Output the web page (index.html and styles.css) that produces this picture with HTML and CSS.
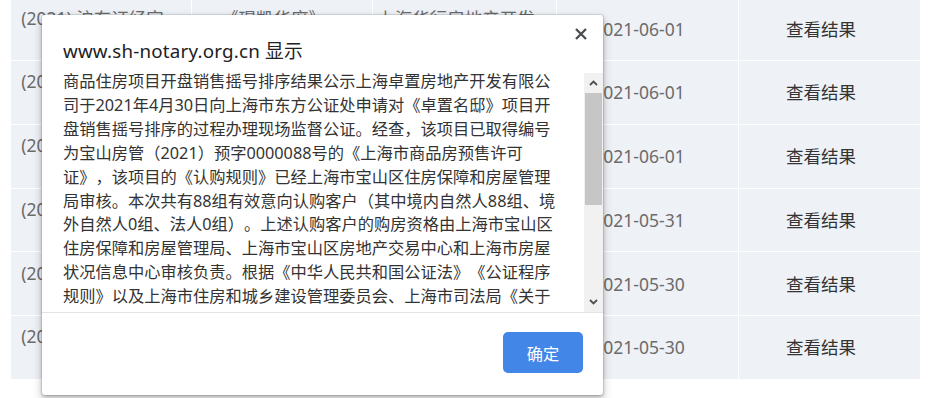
FILE: index.html
```html
<!DOCTYPE html>
<html lang="zh-CN">
<head>
<meta charset="utf-8">
<title>公证结果</title>
<link rel="stylesheet" href="styles.css">
</head>
<body>
<div class="table">
  <div class="cell">(2021) 沪东证经字<br>第4731号</div><div class="cell">《璟凯华府》<br>一期</div><div class="cell">上海华行房地产开发<br>有限公司</div><div class="cell">2021-06-01</div><div class="cell link">查看结果</div>
  <div class="cell">(2021) 沪东证经字<br>第4730号</div><div class="cell">《卓置名邸》<br>一期</div><div class="cell">上海卓置房地产开发<br>有限公司</div><div class="cell">2021-06-01</div><div class="cell link">查看结果</div>
  <div class="cell">(2021) 沪东证经字<br>第4729号</div><div class="cell">《璟园》<br>二期</div><div class="cell">上海城建置业发展<br>有限公司</div><div class="cell">2021-06-01</div><div class="cell link">查看结果</div>
  <div class="cell">(2021) 沪东证经字<br>第4712号</div><div class="cell">《翡翠云庭》<br>一期</div><div class="cell">上海金桥房地产开发<br>有限公司</div><div class="cell">2021-05-31</div><div class="cell link">查看结果</div>
  <div class="cell">(2021) 沪东证经字<br>第4698号</div><div class="cell">《海上源邸》<br>一期</div><div class="cell">上海宝山房地产开发<br>有限公司</div><div class="cell">2021-05-30</div><div class="cell link">查看结果</div>
  <div class="cell">(2021) 沪东证经字<br>第4697号</div><div class="cell">《滨江华庭》<br>二期</div><div class="cell">上海申江房地产开发<br>有限公司</div><div class="cell">2021-05-30</div><div class="cell link">查看结果</div>
</div>

<div class="dialog">
  <div class="dlg-title">www.sh-notary.org.cn 显示</div>
  <button class="dlg-close" aria-label="关闭">
    <svg width="12" height="12" viewBox="0 0 12 12"><path d="M1 1 L11 11 M11 1 L1 11" stroke="#4a4d51" stroke-width="2.3" fill="none"/></svg>
  </button>
  <div class="dlg-body">
    <div class="dlg-text">商品住房项目开盘销售摇号排序结果公示上海卓置房地产开发有限公司于2021年4月30日向上海市东方公证处申请对《卓置名邸》项目开盘销售摇号排序的过程办理现场监督公证。经查，该项目已取得编号为宝山房管（2021）预字0000088号的《上海市商品房预售许可证》，该项目的《认购规则》已经上海市宝山区住房保障和房屋管理局审核。本次共有88组有效意向认购客户（其中境内自然人88组、境外自然人0组、法人0组）。上述认购客户的购房资格由上海市宝山区住房保障和房屋管理局、上海市宝山区房地产交易中心和上海市房屋状况信息中心审核负责。根据《中华人民共和国公证法》《公证程序规则》以及上海市住房和城乡建设管理委员会、上海市司法局《关于进一步加强本市商品住房销售管理的通知》等规定，公证员对摇号排序的全过程进行了现场监督。</div>
    <div class="scrollbar">
      <div class="sb-btn">
        <svg width="9" height="6" viewBox="0 0 9 6"><path d="M1 5 L4.5 1.5 L8 5" stroke="#505050" stroke-width="1.8" fill="none"/></svg>
      </div>
      <div class="sb-track"><div class="sb-thumb"></div></div>
      <div class="sb-btn">
        <svg width="9" height="6" viewBox="0 0 9 6"><path d="M1 1 L4.5 4.5 L8 1" stroke="#505050" stroke-width="1.8" fill="none"/></svg>
      </div>
    </div>
  </div>
  <div class="dlg-footer">
    <button class="dlg-ok">确定</button>
  </div>
</div>
</body>
</html>
```

FILE: styles.css
```css
html, body {
  margin: 0;
  padding: 0;
  background: #ffffff;
}

body {
  position: relative;
  width: 935px;
  height: 398px;
  overflow: hidden;
  font-family: "Noto Sans", "Noto Sans CJK SC", sans-serif;
  text-spacing-trim: space-all;
}

.table {
  display: grid;
  grid-template-columns: 180px 180px 183px 181px 181px;
  grid-auto-rows: 62.75px;
  gap: 1px;
  width: 909px;
  margin: -2.75px 0 0 11px;
  background: #ffffff;
}

.cell {
  display: flex;
  align-items: center;
  justify-content: center;
  text-align: center;
  padding-right: 17px;
  background: #eef1f6;
  color: #6b6b6b;
  font-size: 17.5px;
  line-height: 22px;
  white-space: nowrap;
  overflow: hidden;
}

.cell.link {
  color: #333333;
}

.dialog {
  position: absolute;
  left: 42px;
  top: 15px;
  width: 561px;
  height: 380px;
  background: #ffffff;
  border-radius: 3px;
  box-shadow: 0 0 0 1px rgba(0, 0, 0, 0.08), 0 2px 4px rgba(0, 0, 0, 0.25), 0 4px 10px 2px rgba(0, 0, 0, 0.12);
  display: flex;
  flex-direction: column;
  box-sizing: border-box;
}

.dlg-title {
  padding: 24px 21px 0 21px;
  height: 24px;
  font-size: 18.75px;
  line-height: 24px;
  color: #202124;
  letter-spacing: 0.2px;
}

.dlg-close {
  position: absolute;
  left: 532px;
  top: 12px;
  width: 14px;
  height: 14px;
  padding: 1px;
  border: 0;
  background: transparent;
  display: flex;
  align-items: center;
  justify-content: center;
}

.dlg-body {
  margin-top: 7px;
  height: 242px;
  display: flex;
  justify-content: space-between;
}

.dlg-text {
  width: 496px;
  height: 242px;
  overflow: hidden;
  padding-left: 21px;
  font-family: "Noto Sans", "Noto Sans CJK SC", sans-serif;
  font-size: 16.25px;
  line-height: 23.9px;
  color: #333333;
  text-spacing-trim: space-all;
}

.scrollbar {
  width: 19px;
  margin-top: 3px;
  background: #f1f1f1;
  display: flex;
  flex-direction: column;
}

.sb-btn {
  height: 20px;
  display: flex;
  align-items: center;
  justify-content: center;
}

.sb-track {
  flex: 1;
  display: flex;
  flex-direction: column;
}

.sb-thumb {
  height: 112px;
  background: #c6c6c6;
  margin: 0 1px;
}

.dlg-footer {
  border-top: 1px solid #e3e3e3;
  flex: 1;
  display: flex;
  justify-content: flex-end;
  align-items: flex-start;
  padding: 19px 20px 0 0;
}

.dlg-ok {
  width: 80px;
  height: 41px;
  border: 0;
  border-radius: 5px;
  background: #4286e8;
  color: #ffffff;
  font-family: "Noto Sans CJK SC", sans-serif;
  font-size: 16.25px;
  padding: 0;
}
```
